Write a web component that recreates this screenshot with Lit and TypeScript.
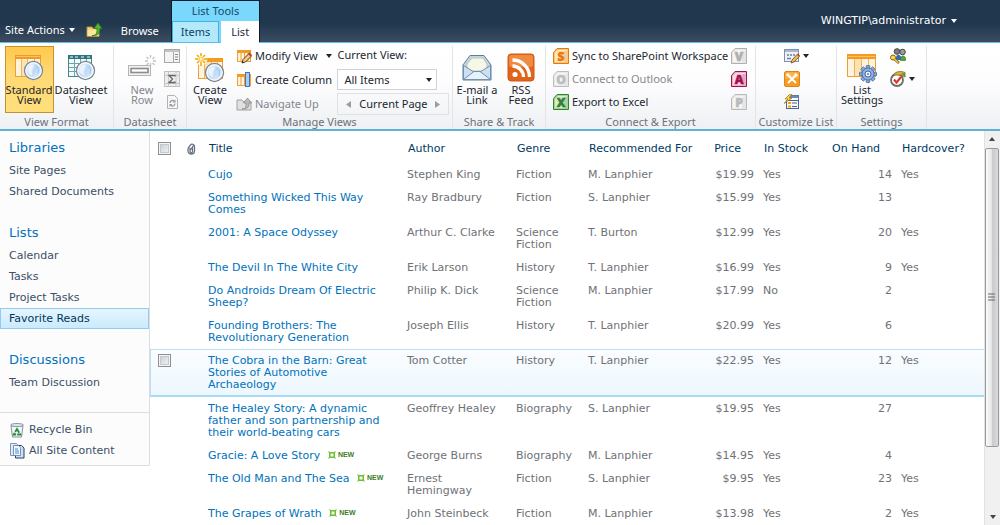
import { LitElement, html, css, svg, nothing } from "lit";
import type { TemplateResult } from "lit";
import { customElement } from "lit/decorators.js";
import { classMap } from "lit/directives/class-map.js";

/* ---------- icon helpers ---------- */

const small = (body: unknown) =>
  html`<svg class="i16" viewBox="0 0 16 16" aria-hidden="true">${body}</svg>`;
const large = (body: unknown) =>
  html`<svg class="i30" viewBox="0 0 30 30" aria-hidden="true">${body}</svg>`;

const lens = svg`
  <circle cx="19.5" cy="17.5" r="9" fill="#dcebfa" stroke="#7e8794" stroke-width="1.4"/>
  <circle cx="19.5" cy="17.5" r="7.6" fill="url(#lensFill)" stroke="#f5f8fc" stroke-width="1.2"/>
  <path d="M13.500 17c1-3.500 3-5 6.500-5.500l-1.500 5-.5 6c-3-.5-4.500-3-4.500-5.500z" fill="#fff" opacity=".6"/>
  <path d="M21 12.500l3.500 3.500-.5 5" fill="none" stroke="#8fb9e4" stroke-width="1" opacity=".7"/>
  <defs><linearGradient id="lensFill" x1="0" y1="0" x2="1" y2="1">
    <stop offset="0" stop-color="#f2f7fd"/><stop offset=".5" stop-color="#bcd9f5"/><stop offset="1" stop-color="#e6f1fb"/>
  </linearGradient></defs>`;

const standardIcon = large(svg`
  <rect x="1.500" y="2.500" width="25" height="21" fill="#fdf3df" stroke="#f0a030"/>
  <rect x="1" y="2" width="26" height="4" fill="#f49a1e"/>
  <path d="M2 3.500h24" stroke="#fbc069"/>
  <path d="M7.500 6v17M13.500 6v17M20.500 6v17" stroke="#f2b357"/>
  <rect x="8" y="7" width="5" height="16" fill="#fce3b4"/>
  ${lens}`);

const datasheetIcon = large(svg`
  <rect x="2.500" y="2.500" width="23" height="21" fill="#f3fafa" stroke="#3f868f"/>
  <rect x="2" y="2" width="24" height="4" fill="#2f747e"/>
  <path d="M4 4h3M9 4h3M15 4h3M21 4h3" stroke="#a5d3d6" stroke-width="1.500"/>
  <path d="M3 10.500h22M3 14.500h22M3 18.500h22M8.500 6v17M14.500 6v17M20.500 6v17" stroke="#69a7ad"/>
  ${lens}`);

const newRowIcon = large(svg`
  <rect x="1.500" y="12.500" width="22" height="10" fill="#f3f3f3" stroke="#b4b4b4"/>
  <rect x="4" y="15.500" width="17" height="4" fill="#fdfdfd" stroke="#8d8d8d" stroke-width="1.600"/>
  <path d="M23.500 2v3M23.500 10v4M18 8h3M26 8h3M19.500 4l2 2M27.500 4l-2 2M19.500 12l2-2M27.500 12l-2-2" stroke="#c3c3c3" stroke-width="1.400"/>`);

const createViewIcon = large(svg`
  <rect x="3.500" y="5.500" width="24" height="20" fill="#fdf3df" stroke="#f0a030"/>
  <rect x="3" y="5" width="25" height="4" fill="#f49a1e"/>
  <path d="M9.500 9v16M16.500 9v16M22.500 9v16" stroke="#f2b357"/>
  <rect x="10" y="9" width="6" height="16" fill="#fce3b4"/>
  <circle cx="6" cy="6" r="6.500" fill="#fff" opacity=".8"/>
  <path d="M6 0v3M6 9v4M0 6h3M9 6h4M2 2l2 2M10 2L8 4M2 10l2-2M10 10L8 8" stroke="#f0a800" stroke-width="1.500"/>
  <circle cx="6" cy="6" r="2" fill="#fff8c8" stroke="#f3c431"/>
  <g transform="translate(0 2)">${lens}</g>`);

const mailIcon = large(svg`
  <path d="M1 12L8 2.500h14L29 12v15H1z" fill="#c3d5e5" stroke="#5d7e9b"/>
  <path d="M5 11l5-6h11l4 6v7H5z" fill="#f6f8e6" stroke="#bac6b4"/>
  <path d="M1.500 12.500L12 19h6l10.500-6.500V26.500h-27z" fill="#cddff0" stroke="#6f91b0"/>
  <path d="M1.500 26.500L12 18.500h6l10.500 8z" fill="#e8f1f9" stroke="#6f91b0"/>`);

const rssIcon = large(svg`
  <rect x="2" y="1" width="26" height="27" rx="3" fill="#e0641a" stroke="#cf5a17"/>
  <rect x="3" y="2" width="24" height="12" rx="2" fill="#ef8a41"/>
  <circle cx="9" cy="21.500" r="2.600" fill="#fff"/>
  <path d="M6.500 13a11 11 0 0 1 11 11M6.500 7a17 17 0 0 1 17 17" fill="none" stroke="#fff" stroke-width="3.300"/>`);

const gearTeeth = [0, 45, 90, 135, 180, 225, 270, 315].map(
  (a) => svg`<rect x="-1.800" y="-8.500" width="3.600" height="4" rx=".6" transform="rotate(${a})" fill="#86a8dd" stroke="#44669f" stroke-width=".8"/>`
);
const listSettingsIcon = large(svg`
  <rect x=".5" y="1.500" width="28" height="22" fill="#fdf3df" stroke="#f0a030"/>
  <rect x="0" y="1" width="29" height="5" fill="#f49a1e"/>
  <path d="M1 3.500h27" stroke="#fbc069"/>
  <path d="M7.500 6v17M14.500 6v17M21.500 6v17" stroke="#f2b357"/>
  <rect x="8" y="6" width="6" height="17" fill="#fce3b4"/>
  <g transform="translate(21 21)">${gearTeeth}
    <circle r="6" fill="#8fb0e3" stroke="#44669f" stroke-width=".8"/>
    <circle r="3" fill="#eef4fd" stroke="#44669f"/><circle r="1" fill="#5b7fba"/></g>`);

const sheet16 = svg`
  <rect x="1.500" y="2.500" width="13" height="11" fill="#fdf3df" stroke="#f0a030"/>
  <rect x="1" y="2" width="14" height="3" fill="#f49a1e"/>
  <path d="M5 5v8M8.500 5v8M12 5v8" stroke="#f0a030"/>`;
const modifyIcon = small(svg`${sheet16}
  <path d="M6 15l1-3.500L13 5.500l2.500 2.500-6 6z" fill="#f0c98a" stroke="#5a3a20"/>
  <path d="M12 6l1.500-1.500L16 7l-1.500 1.500z" fill="#b2452d"/><path d="M6 15l.6-2 1.400 1.400z" fill="#222"/>`);
const createColIcon = small(svg`${sheet16}
  <rect x="9.500" y=".5" width="4" height="14" fill="#a9c8f2" stroke="#4a72b8"/>`);
const navUpIcon = small(svg`
  <path d="M1 4h5l1 1.500h8V14H1z" fill="#e0e0e0" stroke="#a2a2a2"/>
  <path d="M6 13c4 0 4-2 4-6H7.500L11.500 2l4 5H13c0 5-2 6-7 6z" fill="#b9b9b9" stroke="#8c8c8c" stroke-width=".8"/>`);
const paneIcon = small(svg`
  <rect x=".5" y="1.500" width="15" height="13" fill="#f4f4f4" stroke="#a8a8a8"/>
  <rect x="1" y="2" width="14" height="2" fill="#c4c4c4"/><path d="M9.500 4v10" stroke="#a8a8a8"/>
  <path d="M11 6.500h3M11 9h3M11 11.500h3" stroke="#8a8a8a"/>`);
const totalsIcon = small(svg`
  <rect x=".5" y=".5" width="15" height="15" fill="#ededed" stroke="#c0c0c0"/>
  <path d="M.5 4.500h15M.5 12.500h15M4.500 .5v15M12 .5v15" stroke="#cacaca"/>
  <path d="M11 5.500V4.500H5l3.500 3.500L5 11.500h6V10.500" fill="none" stroke="#666" stroke-width="1.300"/>`);
const refreshIcon = small(svg`
  <path d="M3.500 1.500h7l3 3v10h-10z" fill="#f7f7f7" stroke="#b3b3b3"/>
  <path d="M6 9a2.500 2.500 0 0 1 4.500-1.500M11 9.500A2.500 2.500 0 0 1 6.500 11" fill="none" stroke="#999" stroke-width="1.200"/>
  <path d="M11.500 5.500v3h-3zM5.500 13v-3h3z" fill="#999"/>`);

const officeIcon = (letter: string, main: string, tint: string) =>
  small(svg`
    <path d="M.5 15.500V4.500L4 .5h11.500v15z" fill="${tint}" stroke="${main}"/>
    <path d="M2 14V5L5 2h9v12z" fill="#fff" opacity=".55"/>
    <path d="M11 3h3v11h-3z" fill="${main}" opacity=".25"/>
    <text x="8" y="12.500" text-anchor="middle" font-family="Open Sans, sans-serif" font-weight="800" font-size="12" fill="${main}" stroke="${main}" stroke-width=".5">${letter}</text>`);

const formIcon = small(svg`
  <rect x=".5" y="1.500" width="14" height="12" fill="#eef2f8" stroke="#8291ab"/>
  <rect x="1" y="2" width="13" height="2" fill="#a9b8d2"/>
  <path d="M3 7h2M6 7h2M9 7h2M3 10.500h4" stroke="#6f7f9f" stroke-width="1.500"/>
  <path d="M7 15l1-3 5-5.500 2.500 2-5.500 5.500z" fill="#f0b950" stroke="#6b4a22" stroke-width=".8"/>
  <path d="M13 6.500l1-1 2 2-1 1z" fill="#b2452d"/>`);
const designerIcon = small(svg`
  <rect x=".5" y=".5" width="15" height="15" rx="1.500" fill="#f79a22" stroke="#e58410"/>
  <rect x="1.500" y="1.500" width="13" height="6" fill="#fbb650"/>
  <path d="M4 4l8 8M12 4l-8 8" stroke="#fff" stroke-width="2.200"/>
  <path d="M2.500 4.500l2-2M11 2.500l2.500 2.500" stroke="#fff" stroke-width="1.600"/>`);
const workflowIcon = small(svg`
  <rect x="4.500" y="1.500" width="10" height="13" fill="#fff" stroke="#5d76a5"/>
  <rect x="5" y="2" width="9" height="2" fill="#6d88ba"/>
  <rect x="2.500" y="6.500" width="12" height="8" fill="#f6f8fc" stroke="#4a6294"/>
  <rect x="4" y="8" width="3" height="2" fill="#f0a800"/><rect x="4" y="11.500" width="3" height="2" fill="#f0a800"/>
  <path d="M8 9h5M8 12.500h5" stroke="#4a6294"/>
  <path d="M6 0L1 5h3L0 9.500 8 4H5l3-4z" fill="#ffd94a" stroke="#9c7410" stroke-width=".7"/>`);
const peopleIcon = small(svg`
  <circle cx="7" cy="3.500" r="2.800" fill="#7c7c7c" stroke="#444"/><circle cx="12.500" cy="4" r="2.800" fill="#9a9a9a" stroke="#444"/>
  <path d="M6 10c0-4 4-4 5-1v3H6z" fill="#3767b8"/><path d="M10.500 11c0-4 5-4 5 0v1.500h-5z" fill="#57a23c" stroke="#2d6b1d" stroke-width=".6"/>
  <circle cx="3" cy="9.500" r="2.500" fill="#ffd94a" stroke="#80610d"/>
  <path d="M4.500 11l4.500 4" stroke="#80610d" stroke-width="2.600"/><path d="M4.500 11l4 3.600" stroke="#ffd94a" stroke-width="1.200"/>`);
const approveIcon = small(svg`
  <circle cx="7" cy="9" r="6" fill="#fff" stroke="#6c6c6c" stroke-width="1.800"/>
  <path d="M4 8.500l2.500 3L11 6" fill="none" stroke="#e0351f" stroke-width="2.200"/>
  <path d="M3 4c3-4 8-4 12-2.500V6L11 4z" fill="#e8b338" stroke="#74601f" stroke-width=".8"/>
  <path d="M11 2l4 .5V6z" fill="#4e9a36"/>`);

const folderUpIcon = small(svg`
  <path d="M1 5h5l1 1.500h6V14.500H1z" fill="#f4d27a" stroke="#b98d2b"/>
  <path d="M1.500 8h11v6h-11z" fill="#fbe5a4"/>
  <path d="M6 13.500c4.500 0 5-2 5-7H8L12 1l4 5.500h-2.200c0 5.500-2.300 7.500-7.800 7z" fill="#54b533" stroke="#2c7d16" stroke-width=".8"/>`);
const recycleIcon = small(svg`
  <path d="M2 4h12l-1.500 11h-9z" fill="#f2f6f9" stroke="#8595a3"/>
  <ellipse cx="8" cy="3" rx="6.500" ry="1.500" fill="#dfe8ef" stroke="#8797a5"/>
  <path d="M8 7l3.300 5.500H4.700z" fill="none" stroke="#2f8b3c" stroke-width="1.800" stroke-dasharray="4.300 1"/>`);
const contentIcon = small(svg`
  <path d="M1.500 .5h6l2 2v10h-8z" fill="#dce9f8" stroke="#7f97b8"/>
  <path d="M6.500 2.500h6l2.500 2.500v10H6.500z" fill="#cfe0f5" stroke="#22406f"/>
  <path d="M4.500 2.500h5l2 2v8h-7z" fill="#f4f9ff" stroke="#5e7ba6" stroke-width=".8"/>
  <path d="M6 6h3M6 8h4M6 10h4" stroke="#4d86cf"/>`);
const clipIcon = html`<svg class="clip" viewBox="0 0 10 12" role="img" aria-label="Attachments">
  <path d="M7.500 2.500L4 7.500M2 5.500L4.500 2c1-1.500 4-.8 4 1.300v4.500c0 4.500-6.500 4.500-6.500 0V5.500M4 5v3.500c0 1.800 2.500 1.800 2.500 0V4" fill="none" stroke="#687382" stroke-width="1.300"/></svg>`;

const caret = html`<svg class="caret" viewBox="0 0 6 4" aria-hidden="true"><path d="M0 0h6L3 4z" fill="currentColor"/></svg>`;

/* ---------- data ---------- */

interface Book {
  title: string; author: string; genre: string; rec: string; price: string;
  stock: string; hand: number; hard: boolean; fresh?: boolean; active?: boolean;
}
const book = (title: string, author: string, genre: string, rec: string, price: string,
  stock: string, hand: number, hard: boolean, extra: Partial<Book> = {}): Book =>
  ({ title, author, genre, rec, price, stock, hand, hard, ...extra });

const books: Book[] = [
  book("Cujo", "Stephen King", "Fiction", "M. Lanphier", "$19.99", "Yes", 14, true),
  book("Something Wicked This Way Comes", "Ray Bradbury", "Fiction", "S. Lanphier", "$15.99", "Yes", 13, false),
  book("2001: A Space Odyssey", "Arthur C. Clarke", "Science Fiction", "T. Burton", "$12.99", "Yes", 20, true),
  book("The Devil In The White City", "Erik Larson", "History", "T. Lanphier", "$16.99", "Yes", 9, true),
  book("Do Androids Dream Of Electric Sheep?", "Philip K. Dick", "Science Fiction", "M. Lanphier", "$17.99", "No", 2, false),
  book("Founding Brothers: The Revolutionary Generation", "Joseph Ellis", "History", "T. Lanphier", "$20.99", "Yes", 6, false),
  book("The Cobra in the Barn: Great Stories of Automotive Archaeology", "Tom Cotter", "History", "T. Lanphier", "$22.95", "Yes", 12, true, { active: true }),
  book("The Healey Story: A dynamic father and son partnership and their world-beating cars", "Geoffrey Healey", "Biography", "S. Lanphier", "$19.95", "Yes", 27, false),
  book("Gracie: A Love Story", "George Burns", "Biography", "M. Lanphier", "$14.95", "Yes", 4, false, { fresh: true }),
  book("The Old Man and The Sea", "Ernest Hemingway", "Fiction", "S. Lanphier", "$9.95", "Yes", 23, true, { fresh: true }),
  book("The Grapes of Wrath", "John Steinbeck", "Fiction", "M. Lanphier", "$13.98", "Yes", 2, true, { fresh: true }),
];

const navigation = [
  { heading: "Libraries", links: ["Site Pages", "Shared Documents"] },
  { heading: "Lists", links: ["Calendar", "Tasks", "Project Tasks", "Favorite Reads"] },
  { heading: "Discussions", links: ["Team Discussion"] },
];

/* ---------- component ---------- */

@customElement("app-root")
export class AppRoot extends LitElement {
  static styles = css`
    :host {
      display: flex; flex-direction: column; height: 100vh; overflow: hidden;
      background: #fff; color: #6f7276;
      font: 11px/12px Verdana, "DejaVu Sans", sans-serif;
    }
    * { box-sizing: border-box; }
    button, select { font: inherit; color: inherit; background: none; border: 0; padding: 0; margin: 0; }
    a { color: inherit; text-decoration: none; }
    ul, h2 { margin: 0; padding: 0; list-style: none; font-weight: normal; }
    svg { display: block; flex: none; }
    .i16 { width: 16px; height: 16px; }
    .i30 { width: 30px; height: 30px; }
    .caret { width: 6px; height: 4px; }
    .ui { font-family: "Segoe UI", "Noto Sans", sans-serif; font-size: 11px; }

    .top {
      display: flex; flex: none; align-items: flex-end; height: 43px; color: #fff;
      background: linear-gradient(#21374e 0, #21374e 55%, #3a4c60 100%);
      border-bottom: 1px solid #5cbfe6;
    }
    .site { display: flex; align-items: center; gap: 4px; height: 24px; padding-left: 5px; }
    .up { margin-left: 6px; }
    .browse { height: 22px; margin-left: 19px; }
    .tools {
      display: flex; flex-direction: column; margin-left: 12px; color: #16496a;
      background: #79d8fc; border: 1px solid #0d1c2a; border-bottom: 0; height: 42px;
    }
    .tools-title { flex: 1; line-height: 19px; text-align: center; }
    .tabs { display: flex; gap: 2px; height: 22px; margin-bottom: -1px; }
    .tab { border: 1px solid #3fb4e4; border-bottom: 0; height: 21px; padding: 0 8px; background: #b3e9fd; color: #10415e; }
    .tab.on { height: 22px; padding: 0 9px 2px; background: #fff; border-color: #fff; color: #1c2c3c; }
    .user { display: flex; align-items: center; gap: 5px; margin-left: auto; padding-right: 43px; height: 43px; font-family: Verdana, "DejaVu Sans", sans-serif; }

    .ribbon {
      display: flex; flex: none; height: 88px; padding-top: 3px; color: #22272e;
      background: linear-gradient(#fff 0, #fdfdfe 45%, #eef0f3 100%);
      border-bottom: 2px solid #5fb1d6; white-space: nowrap;
    }
    .group { display: flex; flex-direction: column; border-right: 1px solid #e2e4e7; }
    .body { display: flex; flex: 1; justify-content: center; }
    .caption { height: 14px; line-height: 14px; text-align: center; color: #6b717a; }
    .g-format { min-width: 114px; }
    .g-datasheet { min-width: 73px; }
    .g-views { min-width: 266px; }
    .g-views .body { justify-content: flex-start; padding-left: 1px; }
    .g-share { min-width: 93px; }
    .g-connect { min-width: 210px; }
    .g-connect .body { justify-content: space-between; padding: 0 8px 0 7px; }
    .g-custom { min-width: 81px; }
    .g-settings { min-width: 90px; }
    .g-settings .body { justify-content: flex-start; gap: 6px; padding-left: 3px; }
    .big {
      display: flex; flex-direction: column; align-items: center; gap: 2px;
      height: 67px; padding: 6px 0 0; border: 1px solid transparent; line-height: 10px; min-width: 44px;
    }
    .big.on { background: linear-gradient(#ffc94e, #ffd873 40%, #ffdf7c); border-color: #c59231; }
    .off { color: #83878d; }
    .stack { display: flex; flex-direction: column; gap: 8px; padding: 2px 0 0 4px; }
    .rows { display: flex; flex-direction: column; gap: 7px; padding-top: 2px; }
    .row { display: flex; align-items: center; gap: 3px; height: 16px; }
    .views { display: flex; flex-direction: column; padding-left: 5px; }
    .views label { line-height: 18px; }
    .pick { position: relative; width: 100px; margin-top: 5px; }
    .pick select { appearance: none; width: 100%; height: 21px; padding: 0 6px; border: 1px solid #d0d3d7; background: #fff; }
    .pick .caret { position: absolute; right: 5px; top: 9px; pointer-events: none; }
    .pager { display: flex; align-items: center; justify-content: space-between; width: 112px; height: 22px; margin-top: 3px; border: 1px solid #dfe1e5; padding: 0 8px; }
    .pager svg { width: 5px; height: 7px; }

    .main { display: grid; flex: 1; min-height: 0; grid-template-columns: 150px 1fr 16px; }
    .side { align-self: start; background: #fcfcfc; border: 1px solid #dbddde; border-width: 0 1px 1px 0; color: #3b4f65; }
    .nav { padding: 7px 0 19px; }
    .nav ul + h2 { margin-top: 21px; }
    .side h2 { height: 22px; padding-left: 9px; font-size: 13px; line-height: 20px; color: #0072bc; }
    .side li a { display: flex; align-items: center; gap: 4px; height: 21px; padding: 0 9px; border: 1px solid transparent; border-width: 1px 0; }
    .side li a.on { color: #003759; background: linear-gradient(#e6f5fe, #cbeafd); border: 1px solid #91cdf2; padding: 0 8px; }
    .foot { border-top: 1px solid #dbddde; padding: 6px 0 4px; }

    .list { overflow: hidden; min-width: 0; }
    table { width: 100%; table-layout: fixed; border-collapse: separate; border-spacing: 0; }
    th { height: 32px; padding: 3px 4px 0 6px; font-weight: normal; text-align: left; color: #003a63; white-space: nowrap; }
    td { padding: 6px 4px 5px 5px; vertical-align: top; }
    th.num { padding-right: 17px; text-align: right; }
    td.num { text-align: right; }
    td a { color: #0072bc; }
    th.mark, td.mark { padding-left: 8px; padding-right: 0; line-height: 0; }
    .active td { border-top: 1px solid #b9def5; border-bottom: 2px solid #a8d9f7; padding: 5px 4px 4px 5px; background: linear-gradient(#fbfdff, #ecf7fe); }
    .active td.mark { padding: 4px 0 0 7px; border-left: 1px solid #b9def5; }
    .c-mark { width: 30px; } .c-clip { width: 23px; } .c-author { width: 109px; }
    .c-genre { width: 72px; } .c-rec { width: 108px; } .c-price { width: 67px; }
    .c-stock { width: 68px; } .c-hand { width: 70px; } .c-hard { width: 88px; }
    input[type="checkbox"] {
      appearance: none; margin: 0; width: 13px; height: 13px; border: 1px solid #8d8f92;
      background: linear-gradient(135deg, #c6cbd1, #f6f6f6); box-shadow: inset 0 0 0 1px #f4f4f4, inset 0 0 0 2px #c4c9ce;
    }
    .clip { width: 10px; height: 12px; }
    .new { display: inline-flex; align-items: center; gap: 2px; height: 8px; margin-left: 4px; font: bold 7px/8px "Liberation Sans", sans-serif; color: #3b7d1c; }
    .new svg { width: 8px; height: 8px; }

    .bar { display: flex; flex-direction: column; background: #f0f0f0; border-left: 1px solid #e2e2e2; }
    .bar button { display: flex; flex: none; align-items: center; justify-content: center; height: 17px; }
    .bar .caret { color: #444; }
    .flip { transform: rotate(180deg); }
    .thumb {
      display: flex; flex: 29; align-items: center; justify-content: center; margin-right: 1px;
      border: 1px solid #98999b; border-radius: 2px; background: linear-gradient(90deg, #fafafa, #e6e7e8 45%, #c9cacd 55%, #d9dadc);
    }
    .thumb svg { width: 8px; height: 8px; }
    .track { flex: 6; }
  `;

  private big(icon: TemplateResult, lines: [string, string], cls = "") {
    return html`<button class="big ${cls}">${icon}<span>${lines[0]}<br />${lines[1]}</span></button>`;
  }

  private row(icon: TemplateResult, label: string, cls = "", menu = false) {
    return html`<button class="row ${cls}">${icon}${label}${menu ? html`<span>&nbsp;</span>${caret}` : nothing}</button>`;
  }

  private icon(icon: TemplateResult, label: string, menu = false) {
    return html`<button class="row" aria-label=${label}>${icon}${menu ? caret : nothing}</button>`;
  }

  private group(cls: string, caption: string, body: TemplateResult) {
    return html`<section class="group ${cls}"><div class="body">${body}</div><div class="caption">${caption}</div></section>`;
  }

  private renderTop() {
    return html`<header class="top ui">
      <button class="site">Site Actions ${caret}</button>
      <button class="site up" aria-label="Navigate up">${folderUpIcon}</button>
      <button class="browse">Browse</button>
      <div class="tools">
        <div class="tools-title">List Tools</div>
        <div class="tabs"><button class="tab">Items</button><button class="tab on">List</button></div>
      </div>
      <button class="user">WINGTIP\\administrator ${caret}</button>
    </header>`;
  }

  private renderRibbon() {
    return html`<div class="ribbon ui">
      ${this.group("g-format", "View Format", html`
        ${this.big(standardIcon, ["Standard", "View"], "on")}
        ${this.big(datasheetIcon, ["Datasheet", "View"])}`)}
      ${this.group("g-datasheet", "Datasheet", html`
        ${this.big(newRowIcon, ["New", "Row"], "off")}
        <div class="rows">${this.icon(paneIcon, "Task pane")}${this.icon(totalsIcon, "Totals")}${this.icon(refreshIcon, "Refresh data")}</div>`)}
      ${this.group("g-views", "Manage Views", html`
        ${this.big(createViewIcon, ["Create", "View"])}
        <div class="stack">
          ${this.row(modifyIcon, "Modify View", "", true)}
          ${this.row(createColIcon, "Create Column")}
          ${this.row(navUpIcon, "Navigate Up", "off")}
        </div>
        <div class="views">
          <label for="view">Current View:</label>
          <div class="pick"><select id="view"><option>All Items</option></select>${caret}</div>
          <div class="pager">
            <button aria-label="Previous page"><svg viewBox="0 0 5 7"><path d="M5 0v7L0 3.500z" fill="#9a9da2"/></svg></button>
            Current Page
            <button aria-label="Next page"><svg viewBox="0 0 5 7"><path d="M0 0v7l5-3.500z" fill="#9a9da2"/></svg></button>
          </div>
        </div>`)}
      ${this.group("g-share", "Share & Track", html`
        ${this.big(mailIcon, ["E-mail a", "Link"])}
        ${this.big(rssIcon, ["RSS", "Feed"])}`)}
      ${this.group("g-connect", "Connect & Export", html`
        <div class="rows">
          ${this.row(officeIcon("S", "#e8780c", "#fbc877"), "Sync to SharePoint Workspace")}
          ${this.row(officeIcon("O", "#bdbdbd", "#e8e8e8"), "Connect to Outlook", "off")}
          ${this.row(officeIcon("X", "#2f8236", "#a6d48f"), "Export to Excel")}
        </div>
        <div class="rows">
          ${this.icon(officeIcon("V", "#b0b0b0", "#e8e8e8"), "Create Visio diagram")}
          ${this.icon(officeIcon("A", "#a3114f", "#ecb1c9"), "Open with Access")}
          ${this.icon(officeIcon("P", "#b9b9b9", "#e8e8e8"), "Open with Project")}
        </div>`)}
      ${this.group("g-custom", "Customize List", html`
        <div class="rows">
          ${this.icon(formIcon, "Customize form", true)}
          ${this.icon(designerIcon, "Edit in designer")}
          ${this.icon(workflowIcon, "New quick step")}
        </div>`)}
      ${this.group("g-settings", "Settings", html`
        ${this.big(listSettingsIcon, ["List", "Settings"])}
        <div class="rows">
          ${this.icon(peopleIcon, "List permissions")}
          ${this.icon(approveIcon, "Workflow settings", true)}
        </div>`)}
    </div>`;
  }

  private renderSide() {
    return html`<nav class="side">
      <div class="nav">
        ${navigation.map((s) => html`<h2>${s.heading}</h2>
          <ul>${s.links.map((l) => html`<li><a href="#" class=${classMap({ on: l === "Favorite Reads" })}>${l}</a></li>`)}</ul>`)}
      </div>
      <ul class="foot">
        <li><a href="#">${recycleIcon}Recycle Bin</a></li>
        <li><a href="#">${contentIcon}All Site Content</a></li>
      </ul>
    </nav>`;
  }

  private renderBook(b: Book) {
    return html`<tr class=${classMap({ active: !!b.active })}>
      <td class="mark">${b.active ? html`<input type="checkbox" aria-label="Select ${b.title}" />` : nothing}</td>
      <td></td>
      <td><a href="#">${b.title}</a>${b.fresh
        ? html` <span class="new"><svg viewBox="0 0 8 8" aria-hidden="true"><path d="M0 0l2 1h4L8 0 7 2v4L8 8 6 7H2L0 8l1-2V2z" fill="#6cbd40"/><rect x="2.500" y="2.500" width="3" height="3" fill="#f4ffd8"/></svg>NEW</span>`
        : nothing}</td>
      <td>${b.author}</td><td>${b.genre}</td><td>${b.rec}</td>
      <td class="num">${b.price}</td><td>${b.stock}</td>
      <td class="num">${b.hand}</td><td>${b.hard ? "Yes" : nothing}</td>
    </tr>`;
  }

  render() {
    return html`
      ${this.renderTop()} ${this.renderRibbon()}
      <div class="main">
        ${this.renderSide()}
        <main class="list">
          <table>
            <colgroup>
              <col class="c-mark" /><col class="c-clip" /><col /><col class="c-author" /><col class="c-genre" />
              <col class="c-rec" /><col class="c-price" /><col class="c-stock" /><col class="c-hand" /><col class="c-hard" />
            </colgroup>
            <thead><tr>
              <th class="mark"><input type="checkbox" aria-label="Select all" /></th>
              <th>${clipIcon}</th><th>Title</th><th>Author</th><th>Genre</th><th>Recommended For</th>
              <th class="num">Price</th><th>In Stock</th><th class="num">On Hand</th><th>Hardcover?</th>
            </tr></thead>
            <tbody>${books.map((b) => this.renderBook(b))}</tbody>
          </table>
        </main>
        <div class="bar">
          <button class="flip" aria-label="Scroll up">${caret}</button>
          <div class="thumb"><svg viewBox="0 0 8 8" aria-hidden="true"><path d="M0 1h7M0 4h7M0 7h7" stroke="#666"/></svg></div>
          <div class="track"></div>
          <button aria-label="Scroll down">${caret}</button>
        </div>
      </div>`;
  }
}
